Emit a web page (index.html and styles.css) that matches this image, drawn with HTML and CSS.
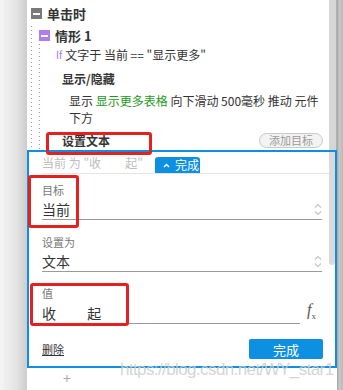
FILE: index.html
```html
<!DOCTYPE html>
<html lang="zh-CN">

<head>
  <meta charset="UTF-8">
  <meta name="viewport" content="width=device-width, initial-scale=1.0">
  <title>交互编辑</title>
  <link rel="stylesheet" href="styles.css">
</head>

<body>
  <div class="shade"></div>
  <div class="main">
    <div class="tree">
      <div class="tree-body">
        <div class="row event"><span class="box box-gray"></span>单击时</div>
        <div class="event-list">
          <div class="row case"><span class="box box-purple"></span>情形 1</div>
          <div class="case-list">
            <div class="row cond"><span class="if">If</span>文字于 当前 == "显示更多"</div>
            <div class="row action">显示/隐藏</div>
            <div class="detail">显示 <span class="target">显示更多表格</span> 向下滑动 500毫秒 推动 元件<br>下方</div>
            <div class="row action-set">
              <span>设置文本</span>
              <button class="add">添加目标</button>
            </div>
          </div>
        </div>
      </div>
      <div class="track"></div>
    </div>

    <div class="editor">
      <div class="thumb"></div>
      <div class="editor-head">
        <span class="summary">当前 为 "收         起"</span>
        <span class="tab"><svg width="7" height="5" viewBox="0 0 7 5"><path d="M1 4 L3.5 1.5 L6 4" fill="none" stroke="#fff" stroke-width="1.4"/></svg><span>完成</span></span>
      </div>

      <div class="field">
        <div class="label">目标</div>
        <div class="value">
          <span>当前</span>
          <svg class="spin" width="8" height="13" viewBox="0 0 8 13"><path d="M1 4.5 L4 1.5 L7 4.5 M1 8.5 L4 11.5 L7 8.5" fill="none" stroke="#c4c4c4" stroke-width="1.1"/></svg>
        </div>
      </div>

      <div class="field field-2">
        <div class="label">设置为</div>
        <div class="value">
          <span>文本</span>
          <svg class="spin" width="8" height="13" viewBox="0 0 8 13"><path d="M1 4.5 L4 1.5 L7 4.5 M1 8.5 L4 11.5 L7 8.5" fill="none" stroke="#c4c4c4" stroke-width="1.1"/></svg>
        </div>
      </div>

      <div class="field field-3">
        <div class="label">值</div>
        <div class="value-row">
          <div class="value value-text">收          起</div>
          <span class="fx"><i>f</i><sub>x</sub></span>
        </div>
      </div>

      <div class="editor-foot">
        <span class="remove">删除</span>
        <button class="done">完成</button>
      </div>
    </div>

    <div class="below">+</div>
  </div>
  <div class="edge"></div>

  <div class="note note-1"></div>
  <div class="note note-2"></div>
  <div class="note note-3"></div>
  <div class="mark">https://blog.csdn.net/WY_star1</div>
</body>

</html>
```

FILE: styles.css
```css
* {
  box-sizing: border-box;
}
body {
  position: relative;
  display: flex;
  width: 343px;
  height: 390px;
  margin: 0;
  overflow: hidden;
  background: #fff;
  color: #333;
  font-family: "Noto Sans CJK SC", "Microsoft YaHei", sans-serif;
  font-size: 12px;
}
.shade {
  width: 27px;
  background: linear-gradient(to right, #f4f4f4, #e4e4e4 60%, #cdcdcd);
}
.main {
  width: 310px;
  display: flex;
  flex-direction: column;
}
.edge {
  width: 6px;
  background: linear-gradient(to right, #a4a4a4, #c9c9c9 40%, #b8b8b8);
}

/* tree */
.tree {
  display: flex;
  height: 150px;
}
.tree-body {
  flex: 1;
}
.track {
  width: 8px;
  background: #d6d6d6;
  border-right: 1px solid #b0b0b0;
}
.row {
  display: flex;
  align-items: center;
  white-space: nowrap;
}
.box {
  position: relative;
  width: 11px;
  height: 11px;
  margin-right: 5px;
}
.box::after {
  content: "";
  position: absolute;
  left: 2px;
  top: 5px;
  width: 7px;
  height: 2px;
  background: #fff;
}
.box-gray {
  background: #7a7a7a;
}
.box-purple {
  background: #b07cf2;
}
.event {
  height: 26px;
  padding-left: 4px;
  font-size: 13px;
  font-weight: bold;
}
.event-list {
  background-image: linear-gradient(#9a9a9a 1px, transparent 1px);
  background-size: 1px 4px;
  background-position: 4px 0;
  background-repeat: repeat-y;
}
.case {
  height: 18px;
  padding-left: 12px;
  font-size: 13px;
  font-weight: bold;
}
.case-list {
  background-image: linear-gradient(#b487f0 1px, transparent 1px);
  background-size: 1px 4px;
  background-position: 12px 0;
  background-repeat: repeat-y;
}
.cond {
  height: 20px;
  padding-left: 29px;
}
.if {
  margin-right: 3px;
  color: #a674ee;
  font-size: 10px;
}
.action {
  height: 28px;
  padding-left: 35px;
  font-weight: bold;
}
.detail {
  height: 34px;
  padding-left: 42px;
  line-height: 17px;
  white-space: nowrap;
}
.target {
  color: #1c9a1c;
}
.action-set {
  align-items: flex-start;
  justify-content: space-between;
  height: 24px;
  padding: 6px 6px 0 35px;
  line-height: 18px;
  font-weight: bold;
}
.add {
  height: 15px;
  width: 64px;
  margin-top: 1px;
  padding: 0;
  border: 1px solid #c8c8c8;
  border-radius: 8px;
  background: #f3f3f3;
  color: #9a9a9a;
  font-family: inherit;
  font-size: 11px;
  line-height: 13px;
}

/* editor */
.editor {
  position: relative;
  height: 218px;
  border: 2px solid #0d8fe2;
}
.thumb {
  position: absolute;
  top: 0;
  right: 0;
  width: 6px;
  height: 113px;
  background: #dadada;
  border-radius: 0 0 3px 3px;
}
.editor-head {
  display: flex;
  align-items: center;
  height: 22px;
  margin: 0 6px 0 13px;
  border-bottom: 1px solid #e4e4e4;
}
.summary {
  color: #bdbdbd;
  white-space: pre;
}
.tab {
  display: flex;
  align-items: center;
  gap: 5px;
  align-self: flex-end;
  width: 45px;
  height: 16px;
  margin-left: 12px;
  padding-left: 8px;
  border-radius: 3px 3px 0 0;
  background: #0d8fe2;
  color: #fff;
  line-height: 16px;
}
.field {
  margin: 8px 13px 0 13px;
}
.field-2 {
  margin-top: 14px;
}
.field-3 {
  margin-top: 13px;
}
.label {
  height: 16px;
  margin-bottom: 1px;
  color: #777;
  font-size: 11px;
  line-height: 16px;
}
.value {
  display: flex;
  align-items: center;
  justify-content: space-between;
  height: 21px;
  border-bottom: 1px solid #9a9a9a;
  font-size: 14px;
  line-height: 20px;
}
.value-row {
  display: flex;
  align-items: center;
}
.value-text {
  width: 258px;
  white-space: pre;
}
.fx {
  margin-left: 7px;
  color: #555;
  font-family: "Liberation Serif", serif;
  font-size: 16px;
  line-height: 16px;
}
.fx sub {
  font-size: 9px;
}
.editor-foot {
  display: flex;
  align-items: center;
  justify-content: space-between;
  margin: 15px 12px 0 13px;
}
.remove {
  color: #333;
  font-size: 11px;
  text-decoration: underline;
}
.done {
  width: 74px;
  height: 20px;
  padding: 0;
  border: 0;
  border-radius: 2px;
  background: #0d8fe2;
  color: #fff;
  font-family: inherit;
  font-size: 13px;
}
.below {
  padding-left: 36px;
  color: #aaa;
  font-size: 14px;
  line-height: 20px;
}

/* red annotations and watermark */
.note {
  position: absolute;
  border: 3px solid #e61f1f;
  border-radius: 3px;
}
.note-1 {
  left: 46px;
  top: 132px;
  width: 106px;
  height: 23px;
}
.note-2 {
  left: 28px;
  top: 175px;
  width: 51px;
  height: 53px;
}
.note-3 {
  left: 30px;
  top: 283px;
  width: 99px;
  height: 43px;
}
.mark {
  position: absolute;
  left: 120px;
  top: 360px;
  color: rgba(205, 205, 205, 0.85);
  font-family: "Liberation Sans", sans-serif;
  font-size: 17px;
  letter-spacing: -0.6px;
  white-space: nowrap;
}
```
